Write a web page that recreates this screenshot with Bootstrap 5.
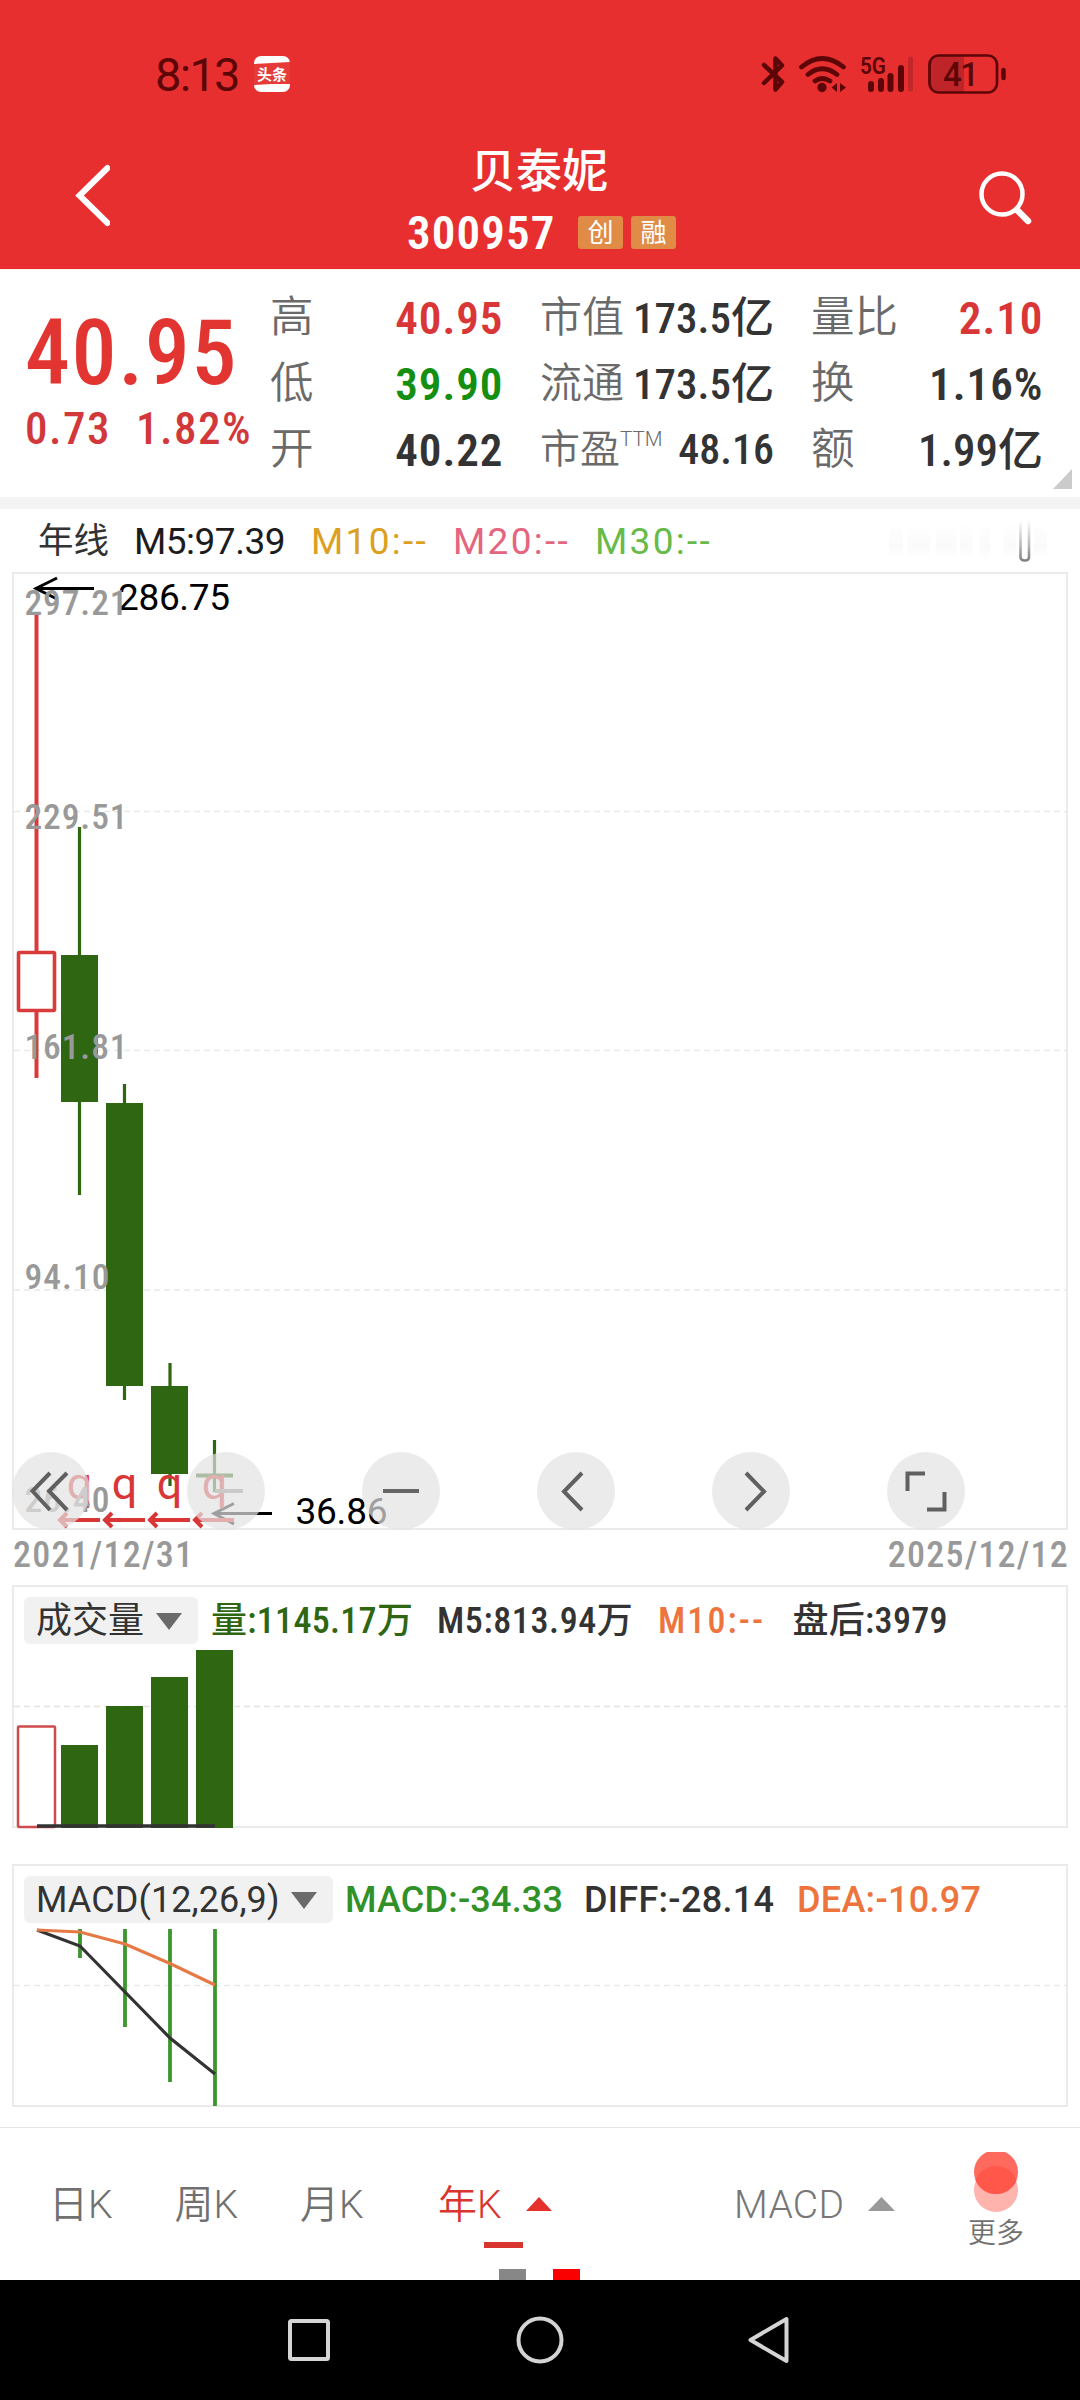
<!DOCTYPE html>
<html lang="zh-CN">
<head>
<meta charset="utf-8">
<meta name="viewport" content="width=device-width, initial-scale=1">
<title>贝泰妮 300957</title>
<link href="https://cdn.jsdelivr.net/npm/bootstrap@5.3.0/dist/css/bootstrap.min.css" rel="stylesheet">
<style>
body{width:1080px;height:2400px;margin:0;background:#fff;color:#333;font-family:Roboto,"Noto Sans CJK SC",sans-serif;line-height:1;white-space:nowrap}
svg{display:block;flex:none}
.din{font-stretch:75%}
/* status bar and title */
.app-head{background:#e82f2f;height:269px;color:#fff}
.status-bar{height:148px;padding:0 74px 0 155px;color:#5c0607}
.clock{font-size:47px;font-weight:450;font-stretch:88%;letter-spacing:-1.7px;width:99px}
.title-bar{height:121px;padding:0 48px 0 74px}
.title-mid{width:274px}
.stock-name{font-size:46px;font-weight:500;padding-left:63px}
.code-row{margin-top:15px}
.stock-code{font-size:47px;font-weight:600;letter-spacing:1.1px;width:171px}
.tagbox{width:45px;height:33px;border-radius:3px;background:#e08c47;font-size:26px;color:#fff}
/* quote summary */
.quote{height:228px;padding:15px 37px 0 25px;border-top:1px solid #fdeee6}
.price-col{width:245px;padding-top:37px}
.price{font-size:90px;font-weight:550;height:64px;line-height:64px;letter-spacing:1.6px;color:#e23430}
.chg{font-size:45px;font-weight:500;color:#d2373a;margin-top:25px;height:34px;letter-spacing:1.5px}
.chg-abs{width:111px}
.q-row{height:66px;display:flex;align-items:center;justify-content:space-between}
.q-lab{color:#6a6a6a;font-size:43.5px;font-weight:350}
.q-val{font-size:45px;font-weight:560;color:#333;font-stretch:75%;letter-spacing:1px;margin-right:-.5px}
.q-mid .q-lab{font-size:42px}
.q-mid .q-lab.q-ttm{font-size:40px}
.q-mid .q-val,.q-val.tight{font-weight:500;letter-spacing:0;margin-right:0}
.q-mid .q-val{font-size:43px}
.q-mid .q-pe{font-size:42px}
.ttm{font-size:20.500px;top:-.85em}
.q1{width:233px}.q-mid{width:234px;margin-left:37px}.q3{width:232px;margin-left:37px}
.up{color:#d93638}.down{color:#158f12}
.corner{position:absolute;right:8px;bottom:8px}
.band{height:12px;background:#f4f4f4}
/* moving averages */
.ma-row{height:63px;padding:2px 32px 0 38px;font-size:37px;color:#1c1c1c}
.ma-row .fs-cn{font-size:35.5px;width:96px;color:#333}
.ma5{width:177px;letter-spacing:-.5px}
.ma10{width:142px;color:#dca021;letter-spacing:2.3px}
.ma20{width:142px;color:#e4657e;letter-spacing:2.3px}
.ma30{color:#68ba49;letter-spacing:2.3px}
/* chart panes */
.pane{border:2px solid #ebebeb;margin:0 12px;position:relative}
.pane-k{height:958px}
.pane-ind{height:243px}
.plot{position:absolute;left:-2px;top:-2px}
.tools{position:absolute;left:-2px;bottom:-2px;gap:97px}
.tool{width:78px;height:78px;border-radius:50%;background:rgba(226,226,226,.7)}
.dates{height:55px;padding:0 11px 6px 13px;font-size:36px;font-weight:500;color:#999;letter-spacing:1.2px}
.ind-row{height:47px;margin:10px 0 0 10px;font-size:36px;font-weight:500;position:relative;z-index:1}
.semi{font-stretch:80%}
.picker{height:47px;background:#f1f1f1;border-radius:6px;padding:1px 15px 0 12px;font-weight:400}
.pick-vol{width:174px}.pick-macd{width:309px;letter-spacing:.1px}
.v1{width:226px;margin-left:13px;color:#2f6612;letter-spacing:.3px}
.v2{width:221px;letter-spacing:.6px}
.v3{width:134.500px;color:#ee743d;letter-spacing:2.1px}
.v4{letter-spacing:.3px}
.m1{width:239px;margin-left:12px;color:#2f9128;letter-spacing:.2px}
.m2{width:213px;letter-spacing:.3px}
.m3{color:#ee743d;letter-spacing:.3px}
.ind-gap{height:36px}.tab-gap{height:20px}
/* period tabs */
.tabs-row{height:153px;border-top:1px solid #e6e6e6;position:relative;font-size:39px;font-weight:350;color:#707070;padding:0 55px 0 49px}
.tab-k{width:125.500px;padding-top:3px}
.tab-k3{width:138px}
.tab-year{color:#d9352f;width:88px;padding-top:3px}
.tab-macd{margin-left:182px;width:134px;padding-top:3px;letter-spacing:.3px;color:#777}
.more{font-size:28px;width:58px;margin-left:72px;padding-top:24px;height:152px}
.more-lab{margin-top:7px}
.underbar{position:absolute;left:484px;top:114px;width:39px;height:6px;background:#d9352f}
.dot{position:absolute;bottom:0;width:27px;height:11px}
.dot-a{left:499px;background:#878787}.dot-b{left:553px;background:#fb0000}
.sysnav{height:120px;background:#000}
</style>
<script src="https://cdn.jsdelivr.net/npm/bootstrap@5.3.0/dist/js/bootstrap.bundle.min.js"></script>
</head>
<body class="d-flex flex-column">
<header class="app-head">
  <div class="status-bar d-flex align-items-center">
    <span class="clock">8:13</span>
    <svg width="37" height="36" viewBox="0 0 37 36"><rect width="36" height="36" rx="7" fill="#fff"/><path d="M0 8 L36 6 V28 L18 28 L0 29Z" fill="#e53a37"/><text x="18" y="23.500" font-size="15" font-weight="700" fill="#fff" text-anchor="middle">头条</text></svg>
    <svg class="ms-auto" width="248" height="40" viewBox="758 53 248 40" fill="none" stroke="#5c0607" stroke-linecap="round" stroke-linejoin="round">
      <path d="M764 64 L782 81 L775.500 88.500 V57.500 L782 64.500 L764 82" stroke-width="4.500"/>
      <path d="M801.500 66 Q822 49 843.500 66 M808 73.500 Q822 62 837 73.500 M815 80 Q822 75 830 80" stroke-width="4.700"/>
      <circle cx="822" cy="86.500" r="4.700" fill="#5c0607" stroke="none"/>
      <path d="M837 82 V91 L831.500 86.500Z M840 82 V91 L846 86.500Z" fill="#5c0607" stroke="none"/>
      <text x="860" y="73" font-size="24" font-weight="600" fill="#5c0607" stroke="none" textLength="26" lengthAdjust="spacingAndGlyphs">5G</text>
      <path d="M871 83V88 M881 80V88 M890.500 75V88 M901 67V88" stroke-width="6"/>
      <path d="M910.500 58V88" stroke-width="5" stroke="#c3272a"/>
      <path d="M939 55H964V91H939Q930 91 930 82V64Q930 55 939 55Z" fill="#bf2528" stroke="none"/>
      <rect x="929.500" y="54.500" width="67.500" height="37" rx="9" stroke-width="2.700"/>
      <path d="M1003.500 69V77" stroke-width="4.500"/>
      <text x="943" y="85" font-size="33" font-weight="500" fill="#5c0607" stroke="none" textLength="36">41</text>
    </svg>
  </div>
  <div class="title-bar d-flex align-items-start">
    <svg width="36" height="64" viewBox="74 163 36 64" fill="none" stroke="#fff" stroke-width="6" stroke-linecap="round" style="margin-top:15px"><path d="M107.500 168L79.500 195.500L107.500 223"/></svg>
    <div class="title-mid d-flex flex-column ms-auto">
      <div class="stock-name">贝泰妮</div>
      <div class="code-row d-flex align-items-center"><span class="stock-code din">300957</span><span class="tagbox d-flex align-items-center justify-content-center me-2">创</span><span class="tagbox d-flex align-items-center justify-content-center">融</span></div>
    </div>
    <svg class="ms-auto" width="54" height="56" viewBox="978 170 54 56" fill="none" stroke="#fff" style="margin-top:22px"><circle cx="1002" cy="194" r="20.500" stroke-width="4.500"/><path d="M1017 210L1028 221" stroke-width="6.500" stroke-linecap="round"/></svg>
  </div>
</header>

<section class="quote d-flex position-relative">
  <div class="price-col">
    <div class="price din">40.95</div>
    <div class="chg din d-flex align-items-center"><span class="chg-abs">0.73</span><span>1.82%</span></div>
  </div>
  <div class="q1">
    <div class="q-row"><span class="q-lab">高</span><span class="q-val up">40.95</span></div>
    <div class="q-row"><span class="q-lab">低</span><span class="q-val down">39.90</span></div>
    <div class="q-row"><span class="q-lab">开</span><span class="q-val">40.22</span></div>
  </div>
  <div class="q-mid">
    <div class="q-row"><span class="q-lab">市值</span><span class="q-val">173.5亿</span></div>
    <div class="q-row"><span class="q-lab">流通</span><span class="q-val">173.5亿</span></div>
    <div class="q-row"><span class="q-lab q-ttm">市盈<sup class="ttm">TTM</sup></span><span class="q-val q-pe">48.16</span></div>
  </div>
  <div class="q3">
    <div class="q-row"><span class="q-lab">量比</span><span class="q-val up">2.10</span></div>
    <div class="q-row"><span class="q-lab">换</span><span class="q-val">1.16%</span></div>
    <div class="q-row"><span class="q-lab">额</span><span class="q-val tight">1.99亿</span></div>
  </div>
  <svg class="corner" width="19" height="20" viewBox="0 0 19 20"><path d="M19 0V20H0Z" fill="#cbcbcb"/></svg>
</section>
<div class="band"></div>

<div class="ma-row d-flex align-items-center">
  <span class="fs-cn">年线</span><span class="ma5">M5:97.39</span><span class="ma10">M10:--</span><span class="ma20">M20:--</span><span class="ma30">M30:--</span>
  <svg class="ms-auto" width="160" height="46" viewBox="888 519 160 46">
    <defs>
      <linearGradient id="fade" x1="0" y1="0" x2="0" y2="1"><stop offset="0" stop-color="#fff"/><stop offset=".6" stop-color="#bbb"/><stop offset="1" stop-color="#808080"/></linearGradient>
      <linearGradient id="haze" x1="0" y1="0" x2="0" y2="1"><stop offset="0" stop-color="#fff"/><stop offset=".7" stop-color="#fafafa"/><stop offset="1" stop-color="#fff"/></linearGradient>
    </defs>
    <path d="M889 522h14v36h-14zM908 526h22v32h-22zM936 526h20v32h-20zM960 524h12v34h-12zM980 524h10v34h-10zM1004 524h12v34h-12zM1034 526h13v32h-13z" fill="url(#haze)"/>
    <path d="M1020.500 520V557Q1020.500 560.500 1025 560.500Q1029 560.500 1029 557V520" fill="none" stroke="url(#fade)" stroke-width="2.600"/>
  </svg>
</div>

<section class="pane pane-k">
  <svg class="plot" width="1056" height="958" viewBox="12 572 1056 958">
    <g stroke="#e9e9e9" stroke-width="1.300" stroke-dasharray="6 4"><path d="M14 811.500H1066M14 1050.500H1066M14 1290H1066"/></g>
    <g stroke="#2f6612" fill="#2f6612" stroke-width="3.200">
      <path d="M79.500 827V1195M124.500 1084V1400M170 1363V1486M214.500 1440V1492" fill="none"/>
      <path d="M61 955h37v147h-37zM106 1103h37v283h-37zM151 1386h37v88h-37z" stroke="none"/>
      <path d="M196 1475.500H233" fill="none" stroke-width="4"/>
    </g>
    <g stroke="#d93b3b" fill="none" stroke-width="4"><path d="M36.500 612V951M36.500 1012V1078"/><rect x="18.500" y="952.500" width="36" height="58" rx="1" stroke-width="3.600"/></g>
    <g stroke="#000" fill="none" stroke-width="3"><path d="M36 588.500H94M57 578L36 588.500L57 599M214 1513.500H272M234 1503.500L214 1513.500L234 1524"/></g>
    <g font-size="37" fill="#000"><text x="118" y="609.500" textLength="112">286.75</text><text x="295.500" y="1523.500" textLength="92">36.86</text></g>
    <g fill="#d93638" font-size="45" font-weight="450" text-anchor="middle"><text x="79.500" y="1498.500">q</text><text x="124.500" y="1498.500">q</text><text x="169.500" y="1498.500">q</text><text x="214.500" y="1498.500">q</text></g>
    <g stroke="#d93638" fill="none" stroke-width="4"><path d="M60 1520H100M105 1520H145M150 1520H190M195 1520H234M67 1513L60 1520L67 1527M112 1513L105 1520L112 1527M157 1513L150 1520L157 1527M202 1513L195 1520L202 1527"/></g>
    <g class="semi" font-size="35.500" font-weight="500" fill="#999"><text x="24.500" y="614.500" textLength="103">297.21</text><text x="24.500" y="828.500" textLength="103">229.51</text><text x="24.500" y="1058.500" textLength="103">161.81</text><text x="24.500" y="1289" textLength="85">94.10</text><text x="24.500" y="1511.500" textLength="85">26.40</text></g>
  </svg>
  <div class="tools d-flex">
    <div class="tool"><svg width="78" height="78" fill="none" stroke="#606060" stroke-width="4"><path d="M38 21L20.500 39L38 58M55 21L37 39L55 58"/></svg></div>
    <div class="tool"><svg width="78" height="78" fill="none" stroke="#cacaca" stroke-width="4"><path d="M28 39H56"/></svg></div>
    <div class="tool"><svg width="78" height="78" fill="none" stroke="#666" stroke-width="4"><path d="M21 39H57"/></svg></div>
    <div class="tool"><svg width="78" height="78" fill="none" stroke="#606060" stroke-width="4"><path d="M45 21L27 39.500L45 58"/></svg></div>
    <div class="tool"><svg width="78" height="78" fill="none" stroke="#606060" stroke-width="4"><path d="M34 21L52 39.500L34 58"/></svg></div>
    <div class="tool"><svg width="78" height="78" fill="none" stroke="#606060" stroke-width="4"><path d="M20.500 39V21.500H38M40 57.500H57.500V40"/></svg></div>
  </div>
</section>
<div class="dates din d-flex justify-content-between align-items-center"><span>2021/12/31</span><span>2025/12/12</span></div>

<section class="pane pane-ind">
  <svg class="plot" width="1056" height="244" viewBox="12 1585 1056 244">
    <path d="M14 1706.500H1066" stroke="#e4e4e4" stroke-width="1.300" stroke-dasharray="6 4"/>
    <path d="M61 1745h37v83h-37zM106 1706h37v122h-37zM151 1677h37v151h-37zM196 1650h37v178h-37z" fill="#2f6612"/>
    <rect x="18" y="1726.500" width="37" height="100.500" rx="1" fill="#fff" stroke="#cf4a4c" stroke-width="2.500"/>
    <path d="M37 1826H215" stroke="#333" stroke-width="3.500"/>
  </svg>
  <div class="ind-row semi d-flex align-items-center">
    <span class="picker pick-vol d-flex align-items-center justify-content-between">成交量<svg width="28" height="18"><path d="M1 1H27L14 18Z" fill="#6b6b6b"/></svg></span>
    <span class="v1">量:1145.17万</span><span class="v2">M5:813.94万</span><span class="v3">M10:--</span><span class="v4">盘后:3979</span>
  </div>
</section>
<div class="ind-gap"></div>
<section class="pane pane-ind">
  <svg class="plot" width="1056" height="243" viewBox="12 1864 1056 243">
    <path d="M14 1985.500H1066" stroke="#e9e9e9" stroke-width="1.300" stroke-dasharray="6 4"/>
    <path d="M80 1929V1958M125 1929V2027M170 1929V2082M215 1929V2106" stroke="#3c962d" stroke-width="3.800"/>
    <path d="M37 1930L80 1946L125 1992L170 2038L215 2074" fill="none" stroke="#333" stroke-width="3.200"/>
    <path d="M37 1930L80 1932L125 1944L170 1963.500L215 1985" fill="none" stroke="#e57a46" stroke-width="3.200"/>
  </svg>
  <div class="ind-row d-flex align-items-center">
    <span class="picker pick-macd d-flex align-items-center justify-content-between">MACD(12,26,9)<svg width="28" height="18"><path d="M1 1H27L14 18Z" fill="#6b6b6b"/></svg></span>
    <span class="m1">MACD:-34.33</span><span class="m2">DIFF:-28.14</span><span class="m3">DEA:-10.97</span>
  </div>
</section>
<div class="tab-gap"></div>

<nav class="tabs-row d-flex align-items-center">
  <span class="tab-k">日K</span><span class="tab-k">周K</span><span class="tab-k tab-k3">月K</span><span class="tab-year">年K</span>
  <svg width="26" height="14"><path d="M13 0L26 14H0Z" fill="#e5302c"/></svg>
  <span class="tab-macd">MACD</span>
  <svg width="27" height="14"><path d="M13.500 0L27 14H0Z" fill="#999"/></svg>
  <div class="more d-flex flex-column align-items-center">
    <svg width="46" height="61" viewBox="973 2153 46 61"><circle cx="996" cy="2191" r="22" fill="#ffb3ad"/><circle cx="996" cy="2173" r="22" fill="#ff6a5e"/><path d="M975.500 2181A22 22 0 0 1 1016.500 2181A22 22 0 0 1 975.500 2181Z" fill="#ff584b"/></svg>
    <span class="more-lab">更多</span>
  </div>
  <i class="underbar"></i><i class="dot dot-a"></i><i class="dot dot-b"></i>
</nav>

<footer class="sysnav d-flex align-items-center">
  <svg width="1080" height="120" viewBox="0 2280 1080 120" fill="none" stroke="#d4d4d4" stroke-width="4" stroke-linejoin="round"><rect x="290" y="2321" width="38" height="38" rx="1.500"/><circle cx="540" cy="2340" r="21.500"/><path d="M750.500 2340L786.500 2319V2361Z"/></svg>
</footer>
</body>
</html>
